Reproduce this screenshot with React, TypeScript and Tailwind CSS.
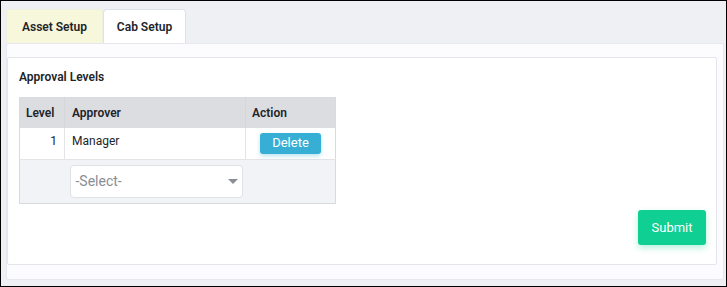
import React from "react";

export default function App() {
  return (
    <div
      className="w-[727px] h-[287px] border border-black bg-[#eef0f4] pl-[5px] pr-[2px] pt-2 pb-[6px] flex flex-col text-[#212529]"
      style={{ fontFamily: "Roboto, 'Liberation Sans', sans-serif" }}
    >
      <div className="flex h-[34px] shrink-0">
        <div className="w-[97px] bg-[#f7f7dc] border border-[#eef0e0] border-b-0 rounded-t-[3px] flex items-center justify-center text-[12px] font-semibold">
          Asset Setup
        </div>
        <div className="w-[83px] bg-white border border-[#dfe2e8] border-b-0 rounded-t-[4px] flex items-center justify-center text-[12px] font-semibold">
          Cab Setup
        </div>
      </div>
      <div className="flex-1 bg-[#fcfcfe] border border-[#e6e8ee] rounded-b-[3px] pt-[13px] pr-[6px] pb-[14px] flex flex-col">
        <div className="flex-1 bg-white border border-[#e4e6ec] rounded-[2px] pl-[11px] pr-[10px] flex flex-col">
          <div className="h-[39px] flex items-end pb-[11px] text-[12px] font-semibold">
            Approval Levels
          </div>
          <table className="w-[317px] border-collapse text-[12px] border border-[#d8dade]">
            <thead>
              <tr className="h-[30px] bg-[#dcdde1]">
                <th className="w-[45px] text-left pl-[6px] font-semibold border-r border-[#d4d6da]">Level</th>
                <th className="w-[181px] text-left pl-[7px] font-semibold border-r border-[#d4d6da]">Approver</th>
                <th className="text-left pl-[6px] font-semibold">Action</th>
              </tr>
            </thead>
            <tbody>
              <tr className="h-[32px] bg-white border-b border-[#e2e4e8]">
                <td className="text-right pr-[7px] align-top pt-[4px] border-r border-[#e2e4e8]">1</td>
                <td className="pl-[7px] align-top pt-[4px] border-r border-[#e2e4e8]">Manager</td>
                <td className="align-top pt-[5px]">
                  <div className="flex justify-center">
                    <button className="w-[61px] h-[21px] bg-[#37afd4] text-white text-[13px] rounded-[3px] shadow-[0_2px_4px_rgba(55,175,212,0.35)] flex items-center justify-center">
                      Delete
                    </button>
                  </div>
                </td>
              </tr>
              <tr className="h-[44px] bg-[#f2f3f6]">
                <td></td>
                <td className="pl-[5px]">
                  <div className="w-[173px] h-[33px] bg-white border border-[#e0e2e6] rounded-[4px] flex items-center justify-between pl-[5px] pr-[4px] text-[14px] text-[#8a8d93]">
                    <span>-Select-</span>
                    <svg width="10" height="6" viewBox="0 0 10 6">
                      <path d="M0 0 L10 0 L5 5 Z" fill="#8a8d93" />
                    </svg>
                  </div>
                </td>
                <td></td>
              </tr>
            </tbody>
          </table>
          <div className="flex justify-end pt-[6px]">
            <button className="w-[68px] h-[35px] bg-[#10cf92] text-white text-[13px] rounded-[3px] shadow-[0_3px_6px_rgba(16,207,146,0.3)]">
              Submit
            </button>
          </div>
        </div>
      </div>
    </div>
  );
}
